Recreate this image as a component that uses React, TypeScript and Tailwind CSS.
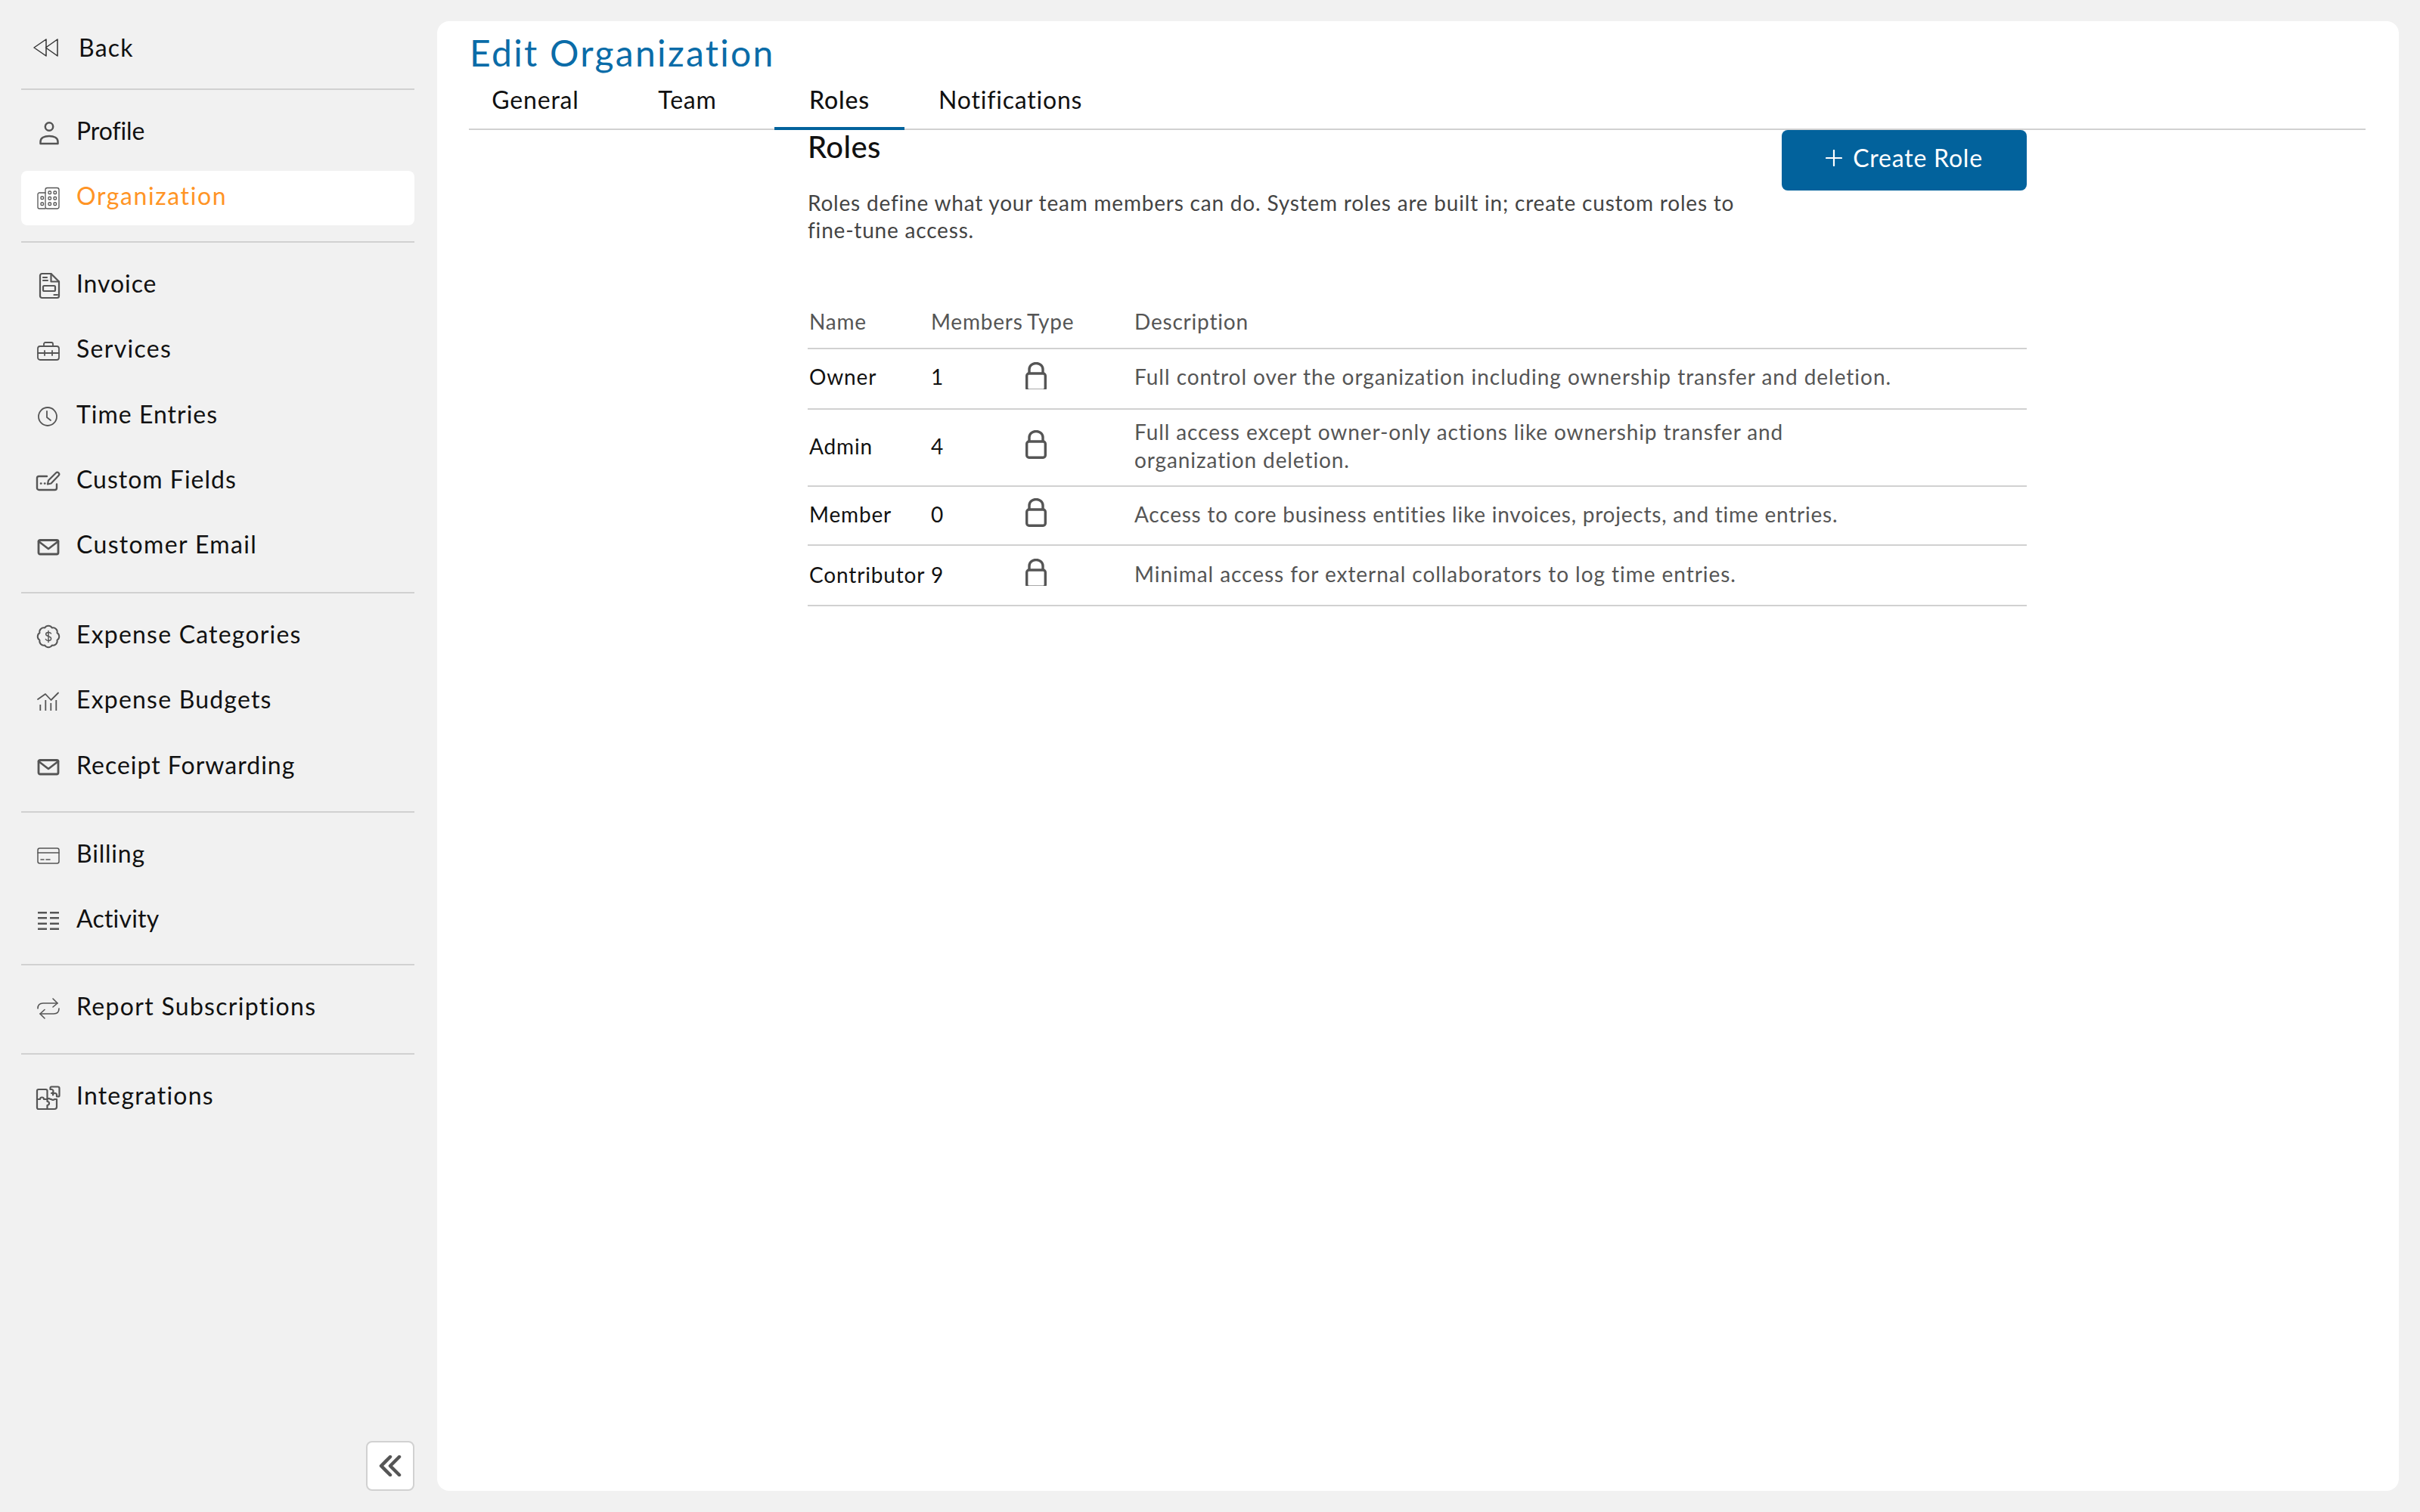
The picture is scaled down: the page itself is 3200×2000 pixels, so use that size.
import React from 'react';

const Svg = ({ h, w = 32, children }: { h: number; w?: number; children: React.ReactNode }) => (
  <svg width={w} height={h} viewBox={`0 0 ${w} ${h}`} fill="none" stroke="#555" strokeWidth="2" strokeLinecap="round" strokeLinejoin="round" className="overflow-visible">
    {children}
  </svg>
);

const BackIcon = () => (
  <Svg h={24}>
    <path d="M17 1 L1 12 L17 23 Z M32 1 L16.5 12 L32 23 Z M32 1 V23" stroke="#333" strokeWidth="1.5" />
  </Svg>
);
const ProfileIcon = () => (
  <Svg h={30}>
    <circle cx="17" cy="6.5" r="5.2" strokeWidth="2.5" />
    <path d="M5.5 29 V26.5 C5.5 21.5 10.5 19 17 19 S28.5 21.5 28.5 26.5 V29 Z" strokeWidth="2.5" />
  </Svg>
);
const OrgIcon = () => (
  <Svg h={28}>
    <g strokeWidth="1.3">
      <path d="M12 7 H4 a2 2 0 0 0-2 2 V26 a2 2 0 0 0 2 2 H12" />
      <rect x="12" y="0.5" width="18" height="27.5" rx="2.5" />
      <rect x="6" y="12" width="3.5" height="3.5" rx="1" />
      <rect x="6" y="20" width="3.5" height="3.5" rx="1" />
      <rect x="16" y="5" width="3.5" height="3.5" rx="1" />
      <rect x="23" y="5" width="3.5" height="3.5" rx="1" />
      <rect x="16" y="12.5" width="3.5" height="3.5" rx="1" />
      <rect x="23" y="12.5" width="3.5" height="3.5" rx="1" />
      <rect x="16" y="20" width="3.5" height="3.5" rx="1" />
      <rect x="23" y="20" width="3.5" height="3.5" rx="1" />
    </g>
  </Svg>
);
const InvoiceIcon = () => (
  <Svg h={34}>
    <g strokeWidth="2.2">
      <path d="M7.5 1 H19.5 L30 11.5 V30.5 a2.5 2.5 0 0 1-2.5 2.5 H7.5 a2.5 2.5 0 0 1-2.5-2.5 V3.5 A2.5 2.5 0 0 1 7.5 1 Z" />
      <path d="M19.5 1 V11.5 H30" />
      <path d="M9 6 H14 M9 10 H15 M23.5 29 H28" />
      <rect x="9" y="17" width="16" height="7" rx="1.5" />
    </g>
  </Svg>
);
const ServicesIcon = () => (
  <Svg h={25}>
    <g strokeWidth="1.8">
      <rect x="2" y="6" width="28" height="18" rx="3" />
      <path d="M10 6 V3 a2 2 0 0 1 2-2 H20 a2 2 0 0 1 2 2 V6" />
      <path d="M2 15 H30 M11 12 V18 M21 12 V18" />
    </g>
  </Svg>
);
const ClockIcon = () => (
  <Svg h={26}>
    <circle cx="15" cy="13" r="12" strokeWidth="1.8" />
    <path d="M14 6 V14 L19 18" strokeWidth="1.8" />
  </Svg>
);
const FieldsIcon = () => (
  <Svg h={26}>
    <path d="M14 6 H3.5 a2.5 2.5 0 0 0-2.5 2.5 V21.5 a2.5 2.5 0 0 0 2.5 2.5 H24.5 a2.5 2.5 0 0 0 2.5-2.5 V16.5" strokeWidth="2.4" />
    <path d="M15 16.5 L16 11.5 L26 1.5 a2.5 2.5 0 0 1 3.5 0 a2.5 2.5 0 0 1 0 3.5 L19.5 15.5 Z" strokeWidth="2.2" />
    <path d="M6 15.5 H6.4 M11 15.5 H11.4" strokeWidth="2.6" />
  </Svg>
);
const MailIcon = () => (
  <Svg h={21}>
    <rect x="3" y="1.5" width="26" height="18.5" rx="2" strokeWidth="2.8" />
    <path d="M3 3 L16 13 L29 3" strokeWidth="2.6" />
  </Svg>
);

// scalloped badge outline, eight bumps round a circle
const badgePath = () => {
  const pts: string[] = [];
  for (let i = 0; i < 8; i++) {
    const a = (i / 8) * Math.PI * 2 + Math.PI / 8;
    const x = 16 + 12.5 * Math.cos(a);
    const y = 14 + 12.5 * Math.sin(a);
    pts.push(i === 0 ? `M${x.toFixed(2)} ${y.toFixed(2)}` : `A5.6 5.6 0 0 1 ${x.toFixed(2)} ${y.toFixed(2)}`);
  }
  const a0 = Math.PI / 8;
  pts.push(`A5.6 5.6 0 0 1 ${(16 + 12.5 * Math.cos(a0)).toFixed(2)} ${(14 + 12.5 * Math.sin(a0)).toFixed(2)}`);
  return pts.join(' ');
};
const BadgeIcon = () => (
  <Svg h={28}>
    <path d={badgePath()} strokeWidth="2" />
    <path d="M19.5 10 C19 8.8 17.8 8.5 16 8.5 C14 8.5 12.7 9.5 12.7 11 C12.7 14.5 19.6 12.8 19.6 16.5 C19.6 18.2 18 19.5 16 19.5 C14.2 19.5 13 18.8 12.4 17.5 M16 6.5 V21.5" strokeWidth="1.5" />
  </Svg>
);
const BudgetIcon = () => (
  <Svg h={24}>
    <path d="M2 9 L12 2 L19.5 10 L29 0.5" strokeWidth="1.8" />
    <path d="M5.3 24 V16 M12.3 24 V10 M19.3 24 V14 M26.3 24 V10" strokeWidth="1.8" strokeLinecap="butt" />
  </Svg>
);
const BillingIcon = () => (
  <Svg h={22}>
    <g strokeWidth="1.5">
      <rect x="2" y="1" width="28" height="20" rx="2.5" />
      <path d="M2 7 H30 M6 16 H10 M13 16 H18" />
    </g>
  </Svg>
);
const ActivityIcon = () => (
  <Svg h={24}>
    <path d="M2 1.3 H14 M18 1.3 H30 M2 8.3 H14 M18 8.3 H30 M2 15.7 H14 M18 15.7 H30 M2 22.7 H14 M18 22.7 H30" strokeWidth="2.4" strokeLinecap="butt" />
  </Svg>
);
const RepeatIcon = () => (
  <Svg h={28}>
    <g strokeWidth="1.6">
      <path d="M2 14 C2 9 5 7 9 7 H28" />
      <path d="M22 1 L28 7 L22 12" />
      <path d="M30 14 C30 19 27 21 23 21 H5" />
      <path d="M11 15.5 L5 21 L11 27" />
    </g>
  </Svg>
);
const PuzzleIcon = () => (
  <Svg h={32}>
    <g strokeWidth="2.2">
      <path d="M3 5 H12.5 a2 2 0 0 1 2 2 V18 a2.5 2.5 0 0 1 4 0 H20 a2.5 2.5 0 0 0 4 0 H27 V28 a3 3 0 0 1-3 3 H3 a2 2 0 0 1-2-2 V7 a2 2 0 0 1 2-2 Z" />
      <path d="M1 18 H5 a2.5 2.5 0 0 1 5 0 H14.5 V21 a2.5 2.5 0 0 1 0 5 V31" />
      <path d="M20 1.5 H28.5 a2 2 0 0 1 2 2 V13 a1.5 1.5 0 0 1-1.5 1.5 H27 V12.5 a2.5 2.5 0 0 0-5 0 V10 H20 a2.5 2.5 0 0 0 0-5 H18.5 V3 a1.5 1.5 0 0 1 1.5-1.5 Z" />
    </g>
  </Svg>
);

const LockIcon = ({ clipped }: { clipped?: boolean }) => (
  <svg width="28" height={clipped ? 36 : 38} viewBox={`0 0 28 ${clipped ? 36 : 38}`} fill="none" stroke="#555" strokeWidth="3.4">
    <path d="M5 15 V9.5 a9 8 0 0 1 18 0 V15" />
    <rect x="1.7" y="15" width="24.6" height={clipped ? 22.3 : 21.3} rx="3" />
  </svg>
);

const sections = [
  {
    pb: 'pb-[20.75px]',
    items: [
      { name: 'Profile', icon: <ProfileIcon />, tracking: 'tracking-[-0.1px]' },
      { name: 'Organization', icon: <OrgIcon />, active: true, tracking: 'tracking-[1.6px]' },
    ],
  },
  {
    pb: 'pb-[24px]',
    items: [
      { name: 'Invoice', icon: <InvoiceIcon />, tracking: 'tracking-[0.9px]' },
      { name: 'Services', icon: <ServicesIcon />, tracking: 'tracking-[1.3px]' },
      { name: 'Time Entries', icon: <ClockIcon />, tracking: 'tracking-[1px]' },
      { name: 'Custom Fields', icon: <FieldsIcon />, tracking: 'tracking-[1px]' },
      { name: 'Customer Email', icon: <MailIcon />, tracking: 'tracking-[1.35px]' },
    ],
  },
  {
    pb: 'pb-[22.5px]',
    items: [
      { name: 'Expense Categories', icon: <BadgeIcon />, tracking: 'tracking-[1.2px]' },
      { name: 'Expense Budgets', icon: <BudgetIcon />, tracking: 'tracking-[1.2px]' },
      { name: 'Receipt Forwarding', icon: <MailIcon />, tracking: 'tracking-[1px]' },
    ],
  },
  {
    pb: 'pb-[20.75px]',
    items: [
      { name: 'Billing', icon: <BillingIcon />, tracking: 'tracking-[0.8px]' },
      { name: 'Activity', icon: <ActivityIcon />, tracking: 'tracking-[0.2px]' },
    ],
  },
  {
    pb: 'pb-[23px]',
    items: [{ name: 'Report Subscriptions', icon: <RepeatIcon />, tracking: 'tracking-[1.3px]' }],
  },
  {
    pb: 'pb-0',
    items: [{ name: 'Integrations', icon: <PuzzleIcon />, tracking: 'tracking-[1.2px]' }],
  },
];

const tabs = ['General', 'Team', 'Roles', 'Notifications'];

const roles = [
  { name: 'Owner', members: '1', clipped: true, h: 'h-[80px]', pb: 'pb-1.5', tracking: 'tracking-[0.97px]', desc: ['Full control over the organization including ownership transfer and deletion.'] },
  { name: 'Admin', members: '4', h: 'h-[102px]', pb: 'pb-1', tracking: 'tracking-[0.9px]', desc: ['Full access except owner-only actions like ownership transfer and', 'organization deletion.'] },
  { name: 'Member', members: '0', h: 'h-[78px]', pb: 'pb-1', tracking: 'tracking-[0.78px]', desc: ['Access to core business entities like invoices, projects, and time entries.'] },
  { name: 'Contributor', members: '9', clipped: true, h: 'h-[80px]', pb: 'pb-[3px]', tracking: 'tracking-[0.95px]', desc: ['Minimal access for external collaborators to log time entries.'] },
];

export default function App() {
  return (
    <div className="flex w-[3200px] h-[2000px] bg-[#f1f1f1] font-[Lato,sans-serif] text-[#111]">
      {/* Sidebar */}
      <aside className="flex flex-col w-[578px] h-[2000px] pt-7 pl-7 pr-[30px] pb-7">
        <div className="flex items-center h-[69px] pl-4 gap-7 text-[32px] tracking-[1.2px]">
          <BackIcon />
          <span>Back</span>
        </div>
        <div className="mt-5 h-0.5 bg-[#d1d1d1]" />
        {sections.map((section) => (
          <div key={section.items[0].name}>
            <div className={`flex flex-col gap-[14.25px] pt-[21px] ${section.pb}`}>
              {section.items.map((item) => (
                <div
                  key={item.name}
                  className={`flex items-center h-[72px] pl-5 gap-[21px] rounded-lg ${item.active ? 'bg-white text-[#ff9425]' : ''}`}
                >
                  <div className="flex items-center justify-center w-8">{item.icon}</div>
                  <span className={`pb-1.5 text-[32px] leading-10 ${item.tracking}`}>{item.name}</span>
                </div>
              ))}
            </div>
            {section.pb !== 'pb-0' && <div className="h-0.5 bg-[#d1d1d1]" />}
          </div>
        ))}
        <div className="flex justify-end mt-auto">
          <button className="flex items-center justify-center w-16 h-[66px] bg-white border-2 border-[#d1d1d1] rounded-lg">
            <svg width="30" height="28" viewBox="0 0 30 28" fill="none" stroke="#555" strokeWidth="4.5" strokeLinecap="round" strokeLinejoin="round">
              <path d="M15 2 L3 14 L15 26 M27 2 L15 14 L27 26" />
            </svg>
          </button>
        </div>
      </aside>

      {/* Main panel */}
      <main className="w-[2594px] h-[1944px] mt-7 pl-[42px] pr-11 bg-white rounded-2xl">
        <h1 className="mt-[14px] h-14 pl-px text-[48px] leading-[56px] tracking-[2.3px] text-[#0a6ca8]">Edit Organization</h1>
        <div className="flex gap-[29px] h-[74px] pl-0.5 border-b-2 border-[#d1d1d1]">
          {tabs.map((tab) => (
            <div
              key={tab}
              className={`relative flex items-center justify-center min-w-[172px] px-4 pb-1 text-[32px] tracking-[0.8px] ${tab === 'Roles' ? 'font-medium' : ''}`}
            >
              {tab}
              {tab === 'Roles' && <div className="absolute -bottom-0.5 left-0 right-0 h-1 bg-[#02629c]" />}
            </div>
          ))}
        </div>

        <section className="w-[1612px] ml-[448px]">
          <div className="flex justify-between items-start">
            <div>
              <h2 className="text-[40px] leading-[44px] font-medium tracking-[0.4px]">Roles</h2>
              <p className="mt-[34px] text-[28px] leading-9 tracking-[0.8px] text-[#444]">
                Roles define what your team members can do. System roles are built in; create custom roles to
                <br />
                fine-tune access.
              </p>
            </div>
            <button className="flex items-center justify-center gap-3.5 w-[324px] h-20 pb-1.5 bg-[#02629c] rounded-lg text-white text-[32px] tracking-[0.8px]">
              <svg width="22" height="22" viewBox="0 0 22 22" stroke="#fff" strokeWidth="2.2" strokeLinecap="round">
                <path d="M11 1 V21 M1 11 H21" />
              </svg>
              Create Role
            </button>
          </div>

          <table className="mt-[71px] w-full table-fixed border-separate border-spacing-0 text-[28px]">
            <colgroup>
              <col className="w-[161px]" />
              <col className="w-[127px]" />
              <col className="w-[144px]" />
              <col />
            </colgroup>
            <thead>
              <tr className="text-[#555] text-left">
                <th className="h-[69px] pl-0.5 pb-1 font-normal border-b-2 border-[#d1d1d1] tracking-[0.8px]">Name</th>
                <th className="pl-0.5 pb-1 font-normal border-b-2 border-[#d1d1d1] tracking-[0.8px] whitespace-nowrap">Members</th>
                <th className="pl-0.5 pb-1 font-normal border-b-2 border-[#d1d1d1] tracking-[0.8px]">Type</th>
                <th className="pb-1 font-normal border-b-2 border-[#d1d1d1] tracking-[0.8px]">Description</th>
              </tr>
            </thead>
            <tbody>
              {roles.map((role) => (
                <tr key={role.name}>
                  <td className={`${role.h} pl-0.5 ${role.pb} border-b-2 border-[#d1d1d1] tracking-[0.85px]`}>{role.name}</td>
                  <td className={`pl-0.5 ${role.pb} border-b-2 border-[#d1d1d1]`}>{role.members}</td>
                  <td className="pb-2 border-b-2 border-[#d1d1d1]">
                    <LockIcon clipped={role.clipped} />
                  </td>
                  <td className={`${role.pb} leading-[37px] border-b-2 border-[#d1d1d1] text-[#555] ${role.tracking}`}>
                    {role.desc.map((line) => (
                      <div key={line}>{line}</div>
                    ))}
                  </td>
                </tr>
              ))}
            </tbody>
          </table>
        </section>
      </main>
    </div>
  );
}
